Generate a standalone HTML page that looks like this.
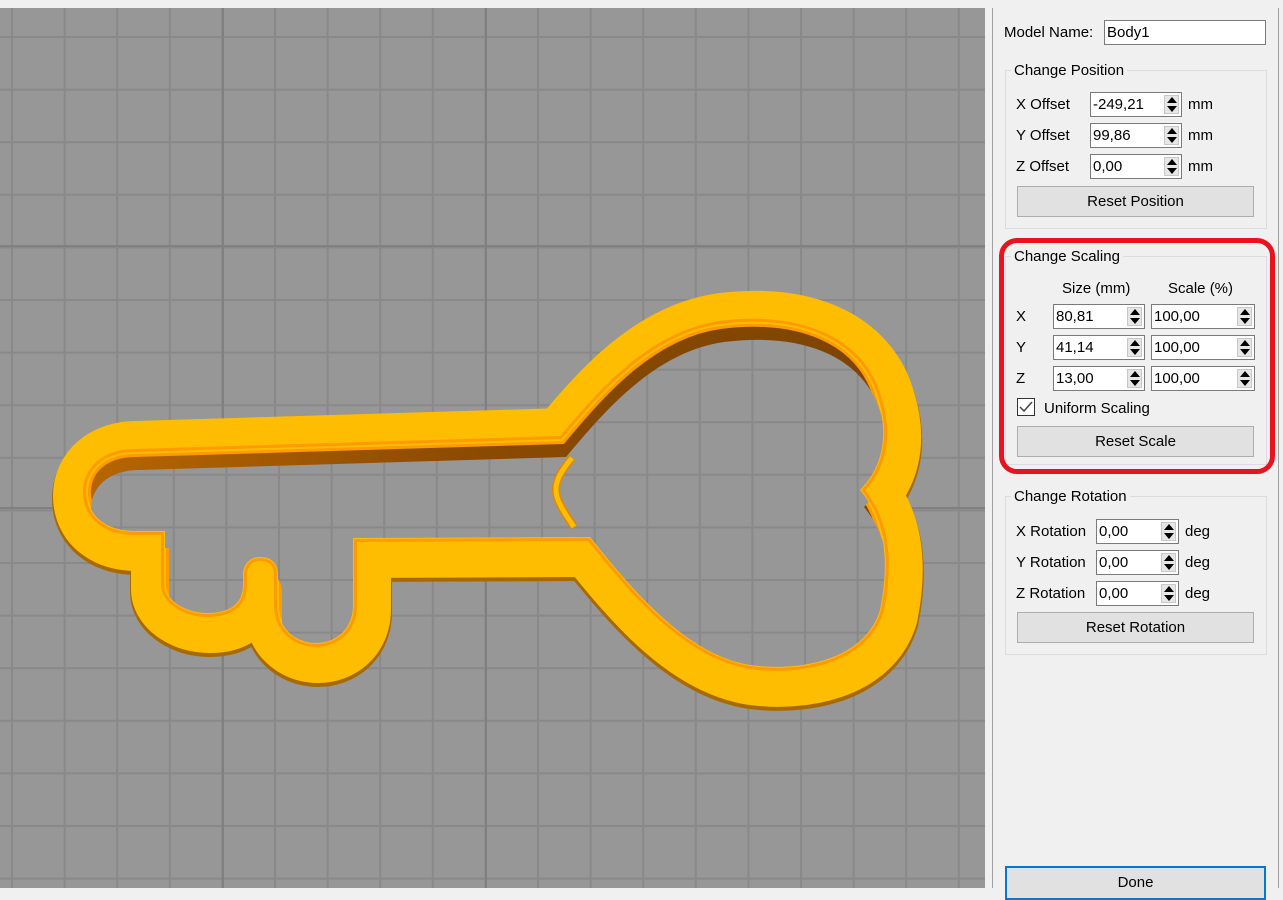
<!DOCTYPE html>
<html><head><meta charset="utf-8">
<style>
*{margin:0;padding:0;box-sizing:border-box}
body{width:1283px;height:888px;overflow:hidden;background:#f0f0f0;font-family:"Liberation Sans",sans-serif;font-size:14.5px;color:#000;position:relative}
.a{position:absolute;white-space:nowrap}
.in{position:absolute;background:#fff;border:1px solid #7a7a7a;height:25px;padding:3px 0 0 2px;font-size:15px}
.sp{position:absolute;right:2px;top:2px;width:15px;height:19px;background:#e6e6e6;border:1px solid #c8c8c8}
.sp:before{content:"";position:absolute;left:2px;top:1px;border-left:5px solid transparent;border-right:5px solid transparent;border-bottom:6px solid #000}
.sp:after{content:"";position:absolute;left:2px;bottom:1px;border-left:5px solid transparent;border-right:5px solid transparent;border-top:6px solid #000}
.grp{position:absolute;border:1px solid #dcdcdc}
.gt{position:absolute;background:#f0f0f0;padding:0 3px;font-size:15px}
.btn{position:absolute;background:#e1e1e1;border:1px solid #adadad;text-align:center;font-size:15px;line-height:29px}
</style></head><body>
<svg class="a" style="left:0;top:8px" width="985" height="880" viewBox="0 8 985 880">
<defs>
<pattern id="g" patternUnits="userSpaceOnUse" x="11" y="36" width="52.6" height="52.6">
<rect width="52.6" height="52.6" fill="#979797"/>
<rect width="2" height="52.6" fill="#898989"/>
<rect width="52.6" height="2" fill="#898989"/>
</pattern>
<linearGradient id="w" x1="0" x2="1"><stop offset="0" stop-color="#b86500"/><stop offset=".5" stop-color="#8a4a00"/><stop offset="1" stop-color="#7e4400"/></linearGradient>
<path id="h" d="M135,453 L562,440 C600,395 650,335 720,325 C800,315 862,340 878,400 C890,440 880,470 860,490 C885,520 890,560 880,610 C865,660 800,672 750,665 C690,655 640,600 590,537 L353,538 L353,605 C353,630 335,643 316,643 C295,643 278,628 278,605 L278,575 C278,562 270,557 260,557 C250,557 243,564 243,575 L243,585 C243,605 228,613 208,613 C185,613 165,600 165,585 L165,531 L135,531 C105,531 87,515 87,492 C87,470 105,453 135,453 Z"/>
</defs>
<rect x="0" y="8" width="985" height="880" fill="url(#g)"/>
<rect x="0" y="245" width="985" height="2" fill="#808080"/>
<rect x="0" y="507" width="985" height="2" fill="#808080"/>
<rect x="222" y="8" width="2" height="880" fill="#808080"/>
<rect x="485" y="8" width="2" height="880" fill="#808080"/>
<use href="#h" transform="translate(2,7)" fill="none" stroke="#a86a00" stroke-width="74" stroke-linejoin="round"/>
<use href="#h" transform="translate(2,4)" fill="none" stroke="#ffbd00" stroke-width="72" stroke-linejoin="round"/>
<use href="#h" fill="url(#w)" stroke="#ff9a00" stroke-width="8"/>
<use href="#h" fill="none" stroke="#ffbd00" stroke-width="2"/>
<clipPath id="c"><use href="#h"/></clipPath>
<g clip-path="url(#c)"><use href="#h" transform="translate(4,17)" fill="url(#g)"/></g>
<path d="M572,458 C560,472 552,485 558,500 C562,510 568,518 574,527" fill="none" stroke="#e08800" stroke-width="8"/>
<path d="M572,458 C560,472 552,485 558,500 C562,510 568,518 574,527" fill="none" stroke="#ffbd00" stroke-width="5"/>
</svg>
<div class="a" style="left:992px;top:8px;width:1px;height:880px;background:#a0a0a0"></div>
<div class="a" style="left:1278px;top:8px;width:1px;height:880px;background:#a0a0a0"></div>

<div class="a" style="left:1004px;top:24px;font-size:15px">Model Name:</div>
<div class="in" style="left:1104px;top:20px;width:162px;">Body1</div>

<div class="grp" style="left:1005px;top:70px;width:262px;height:159px"></div>
<div class="gt" style="left:1011px;top:62px">Change Position</div>
<div class="a" style="left:1016px;top:96px;font-size:15px">X Offset</div>
<div class="in" style="left:1090px;top:92px;width:92px">-249,21<div class="sp"></div></div>
<div class="a" style="left:1188px;top:96px;font-size:15px">mm</div>
<div class="a" style="left:1016px;top:127px;font-size:15px">Y Offset</div>
<div class="in" style="left:1090px;top:123px;width:92px">99,86<div class="sp"></div></div>
<div class="a" style="left:1188px;top:127px;font-size:15px">mm</div>
<div class="a" style="left:1016px;top:158px;font-size:15px">Z Offset</div>
<div class="in" style="left:1090px;top:154px;width:92px">0,00<div class="sp"></div></div>
<div class="a" style="left:1188px;top:158px;font-size:15px">mm</div>
<div class="btn" style="left:1017px;top:186px;width:237px;height:31px">Reset Position</div>

<div class="grp" style="left:1005px;top:256px;width:262px;height:209px"></div>
<div class="gt" style="left:1011px;top:248px">Change Scaling</div>
<div class="a" style="left:1062px;top:280px;font-size:15px">Size (mm)</div>
<div class="a" style="left:1168px;top:280px;font-size:15px">Scale (%)</div>
<div class="a" style="left:1016px;top:308px;font-size:15px">X</div>
<div class="in" style="left:1053px;top:304px;width:92px">80,81<div class="sp"></div></div>
<div class="in" style="left:1151px;top:304px;width:104px">100,00<div class="sp"></div></div>
<div class="a" style="left:1016px;top:339px;font-size:15px">Y</div>
<div class="in" style="left:1053px;top:335px;width:92px">41,14<div class="sp"></div></div>
<div class="in" style="left:1151px;top:335px;width:104px">100,00<div class="sp"></div></div>
<div class="a" style="left:1016px;top:370px;font-size:15px">Z</div>
<div class="in" style="left:1053px;top:366px;width:92px">13,00<div class="sp"></div></div>
<div class="in" style="left:1151px;top:366px;width:104px">100,00<div class="sp"></div></div>
<div class="a" style="left:1017px;top:398px;width:18px;height:18px;background:#fff;border:1px solid #333"></div>
<svg class="a" style="left:1017px;top:398px" width="18" height="18"><path d="M3,9 L7,13 L15,4" fill="none" stroke="#444" stroke-width="1.5"/></svg>
<div class="a" style="left:1044px;top:400px;font-size:15px">Uniform Scaling</div>
<div class="btn" style="left:1017px;top:426px;width:237px;height:31px">Reset Scale</div>
<div class="a" style="left:999px;top:238px;width:276px;height:236px;border:5px solid #e8131f;border-radius:18px"></div>

<div class="grp" style="left:1005px;top:496px;width:262px;height:159px"></div>
<div class="gt" style="left:1011px;top:488px">Change Rotation</div>
<div class="a" style="left:1016px;top:523px;font-size:15px">X Rotation</div>
<div class="in" style="left:1096px;top:519px;width:83px">0,00<div class="sp"></div></div>
<div class="a" style="left:1185px;top:523px;font-size:15px">deg</div>
<div class="a" style="left:1016px;top:554px;font-size:15px">Y Rotation</div>
<div class="in" style="left:1096px;top:550px;width:83px">0,00<div class="sp"></div></div>
<div class="a" style="left:1185px;top:554px;font-size:15px">deg</div>
<div class="a" style="left:1016px;top:585px;font-size:15px">Z Rotation</div>
<div class="in" style="left:1096px;top:581px;width:83px">0,00<div class="sp"></div></div>
<div class="a" style="left:1185px;top:585px;font-size:15px">deg</div>
<div class="btn" style="left:1017px;top:612px;width:237px;height:31px">Reset Rotation</div>

<div class="btn" style="left:1005px;top:866px;width:261px;height:34px;border:2px solid #0078d7;line-height:30px">Done</div>
</body></html>
